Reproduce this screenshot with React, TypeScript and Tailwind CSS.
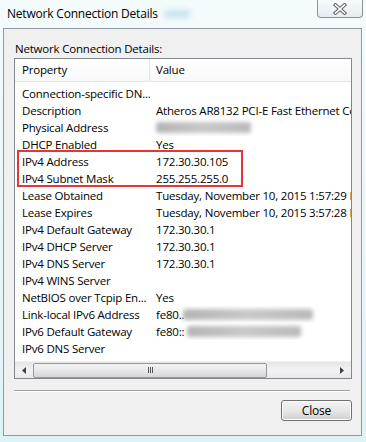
import React from 'react';

type Row = { name: string; value?: string; blur?: [number, number]; prefix?: string };

const rows: Row[] = [
  { name: 'Connection-specific DN...' },
  { name: 'Description', value: 'Atheros AR8132 PCI-E Fast Ethernet Controller (NDIS 6.20)' },
  { name: 'Physical Address', blur: [0, 95] },
  { name: 'DHCP Enabled', value: 'Yes' },
  { name: 'IPv4 Address', value: '172.30.30.105' },
  { name: 'IPv4 Subnet Mask', value: '255.255.255.0' },
  { name: 'Lease Obtained', value: 'Tuesday, November 10, 2015 1:57:29 PM' },
  { name: 'Lease Expires', value: 'Tuesday, November 10, 2015 3:57:28 PM' },
  { name: 'IPv4 Default Gateway', value: '172.30.30.1' },
  { name: 'IPv4 DHCP Server', value: '172.30.30.1' },
  { name: 'IPv4 DNS Server', value: '172.30.30.1' },
  { name: 'IPv4 WINS Server' },
  { name: 'NetBIOS over Tcpip En...', value: 'Yes' },
  { name: 'Link-local IPv6 Address', prefix: 'fe80..', blur: [27, 130] },
  { name: 'IPv6 Default Gateway', prefix: 'fe80::', blur: [31, 114] },
  { name: 'IPv6 DNS Server' },
];

function CloseGlyph() {
  return (
    <svg width="14" height="12" viewBox="0 0 14 12">
      <path d="M2.5 2 L11.5 10 M11.5 2 L2.5 10" stroke="#5b6168" strokeWidth="3.6" strokeLinecap="square" />
      <path d="M2.5 2 L11.5 10 M11.5 2 L2.5 10" stroke="#ffffff" strokeWidth="1.6" strokeLinecap="square" />
    </svg>
  );
}

function ScrollBar() {
  return (
    <div className="flex h-[17px] shrink-0 items-center bg-gradient-to-b from-[#e6e6e6] via-[#f2f2f2] to-[#e9e9e9] border-t border-[#f0f0f0]">
      <div className="flex w-[18px] justify-center">
        <svg width="4" height="7" viewBox="0 0 4 7">
          <path d="M4 0 L0 3.5 L4 7 Z" fill="#404040" />
        </svg>
      </div>
      <div className="flex h-[15px] w-[234px] items-center justify-center rounded-[2px] border border-[#979797] bg-gradient-to-b from-[#f3f3f3] via-[#e8e8e8] to-[#d6d6d6]">
        <div className="flex gap-[1px]">
          <div className="h-[6px] w-[1px] bg-[#555]" />
          <div className="h-[6px] w-[1px] bg-[#555]" />
          <div className="h-[6px] w-[1px] bg-[#555]" />
        </div>
      </div>
      <div className="flex-1" />
      <div className="flex w-[18px] justify-center">
        <svg width="4" height="7" viewBox="0 0 4 7">
          <path d="M0 0 L4 3.5 L0 7 Z" fill="#404040" />
        </svg>
      </div>
    </div>
  );
}

export default function App() {
  return (
    <div
      className="relative flex h-[442px] w-[366px] flex-col overflow-hidden bg-gradient-to-b from-[#f4fbfc] via-[#eaf7f9] to-[#def3f6] text-[11.5px] tracking-[-0.2px] text-black"
      style={{ fontFamily: '"Open Sans", "Noto Sans", sans-serif' }}
    >
      {/* title bar */}
      <div className="relative flex h-[28px] items-center pl-[7px]">
        <span className="text-[12px] leading-none">Network Connection Details</span>
        <div className="ml-[6px] h-[6px] w-[26px] rounded-full bg-[#b8dbe8] blur-[3px]" />
        <div className="absolute right-[3px] top-0 flex h-[18px] w-[46px] items-center justify-center rounded-b-[4px] border border-t-0 border-[#8a9199] bg-gradient-to-b from-[#f8fbfc] to-[#e4ecf0]">
          <CloseGlyph />
        </div>
      </div>

      {/* client area */}
      <div className="ml-[3px] mr-[4px] flex h-[408px] flex-col border border-[#8d9aa5] bg-[#f0f0f0] pl-[10px] pr-[9px]">
        <div className="mt-[11px] h-[17px] pl-[1px] leading-[17px]">Network Connection Details:</div>

        <div className="relative mt-[1px] flex h-[321px] flex-col overflow-hidden border border-[#828790] bg-white">
          {/* header */}
          <div className="flex h-[23px] shrink-0 items-center border-b border-[#e5e5e5] bg-gradient-to-b from-white to-[#f7f8f9]">
            <div className="flex h-full w-[135px] items-center border-r border-[#e5e5e5] pl-[7px]">Property</div>
            <div className="pl-[6px]">Value</div>
          </div>

          {/* rows */}
          <div className="flex-1 pt-[3px]">
            {rows.map(r => (
              <div key={r.name} className="flex h-[17px] items-center whitespace-nowrap">
                <div className="w-[135px] shrink-0 pl-[7px]">{r.name}</div>
                <div className="relative flex h-full flex-1 items-center overflow-hidden pl-[6px]">
                  {r.value && <span>{r.value}</span>}
                  {r.prefix && <span>{r.prefix}</span>}
                  {r.blur && (
                    <span
                      className="absolute top-[3px] h-[11px] rounded-[3px] bg-gradient-to-r from-[#b4b4b4] via-[#c8c8c8] to-[#bababa] blur-[2px]"
                      style={{ left: 6 + r.blur[0], width: r.blur[1] }}
                    />
                  )}
                </div>
              </div>
            ))}
          </div>

          <ScrollBar />

          {/* highlight annotation */}
          <div className="pointer-events-none absolute left-[2px] top-[91px] h-[37px] w-[226px] border-2 border-[#e8333a]" />
        </div>

        <div className="mt-[11px] mr-[2px] h-[2px] border-t border-[#a0a0a0] border-b border-b-white" />

        <div className="mt-[8px] flex justify-end">
          <div className="flex h-[21px] w-[71px] items-center justify-center rounded-[3px] border border-[#707070] bg-gradient-to-b from-[#f2f2f2] via-[#e8e8e8] to-[#cfcfcf] text-[12px] shadow-[inset_0_0_0_1px_#fcfcfc]">
            Close
          </div>
        </div>
      </div>
    </div>
  );
}
